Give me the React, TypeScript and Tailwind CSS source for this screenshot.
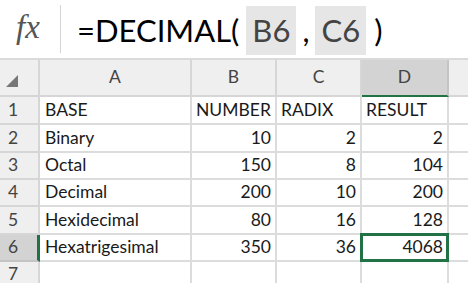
import React from "react";

const rows: [string, string, string, string][] = [
  ["BASE", "NUMBER", "RADIX", "RESULT"],
  ["Binary", "10", "2", "2"],
  ["Octal", "150", "8", "104"],
  ["Decimal", "200", "10", "200"],
  ["Hexidecimal", "80", "16", "128"],
  ["Hexatrigesimal", "350", "36", "4068"],
  ["", "", "", ""],
];
const heights = ["h-[28px]", "h-[28px]", "h-[27px]", "h-[27px]", "h-[28px]", "h-[27px]", "h-[27px]"];

export default function App() {
  const font = { fontFamily: "Lato, 'Open Sans', sans-serif" };
  return (
    <div className="w-[468px] h-[283px] overflow-hidden bg-white text-[#1a1a1a]" style={font}>
      {/* formula bar */}
      <div className="flex h-[60px] border-b-2 border-[#dadada] bg-white">
        <div className="w-[60px] flex items-center justify-center">
          <span className="text-[33px] italic text-[#555] -mt-[3px] -ml-[4px]" style={{ fontFamily: "'Liberation Serif', serif" }}>fx</span>
        </div>
        <div className="w-px bg-[#d4d4d4] my-[5px]" />
        <div className="flex items-center pl-[16px] pt-[2px] text-[31px] text-black leading-none">
          <span>=DECIMAL(</span>
          <span className="ml-[7px] bg-[#e6e6e6] text-[#444] h-[49px] px-[6px] flex items-center">B6</span>
          <span className="ml-[6px] mr-[6px]">,</span>
          <span className="bg-[#e6e6e6] text-[#444] h-[49px] px-[6px] flex items-center">C6</span>
          <span className="ml-[8px]">)</span>
        </div>
      </div>
      {/* grid */}
      <div className="grid grid-cols-[40px_152px_85px_85px_87px_1fr] text-[17.5px]">
        {/* header row */}
        <div className="h-[37px] bg-[#efefef] border-r-2 border-b-2 border-[#d6d6d6] relative">
          <svg className="absolute left-[6px] top-[15px]" width="13" height="12" viewBox="0 0 13 12">
            <polygon points="12,0 12,12 0,12" fill="#777" />
          </svg>
        </div>
        {["A", "B", "C"].map((c) => (
          <div key={c} className="h-[37px] bg-[#efefef] border-r-2 border-b-2 border-[#d6d6d6] flex items-center justify-center text-[#444]">
            {c}
          </div>
        ))}
        <div className="h-[37px] bg-[#d3d3d3] border-r-2 border-[#c4c4c4] border-b-2 border-b-[#217346] flex items-center justify-center text-[#444]">
          D
        </div>
        <div className="h-[37px] bg-[#efefef] border-b-2 border-[#d6d6d6]" />
        {rows.map((r, i) => {
          const sel = i === 5;
          const h = heights[i];
          return (
            <React.Fragment key={i}>
              <div
                className={`${h} border-b-2 flex items-center pl-[8px] text-[#444] ${
                  sel ? "bg-[#d3d3d3] border-b-[#c4c4c4] border-r-[3px] border-r-[#217346]" : "bg-[#efefef] border-[#d6d6d6] border-r-2"
                }`}
              >
                {i + 1}
              </div>
              <div className={`${h} border-r-2 border-b-2 border-[#dcdcdc] flex items-center pl-[5px]`}>{r[0]}</div>
              {i === 0 ? (
                <>
                  <div className={`${h} border-r-2 border-b-2 border-[#dcdcdc] flex items-center pl-[4px]`}>{r[1]}</div>
                  <div className={`${h} border-r-2 border-b-2 border-[#dcdcdc] flex items-center pl-[4px]`}>{r[2]}</div>
                  <div className={`${h} border-r-2 border-b-2 border-[#dcdcdc] flex items-center pl-[4px]`}>{r[3]}</div>
                </>
              ) : (
                <>
                  <div className={`${h} border-r-2 border-b-2 border-[#dcdcdc] flex items-center justify-end pr-[4px]`}>{r[1]}</div>
                  <div className={`${h} border-r-2 border-b-2 border-[#dcdcdc] flex items-center justify-end pr-[4px]`}>{r[2]}</div>
                  <div className={`${h} border-r-2 border-b-2 border-[#dcdcdc] flex items-center justify-end pr-[4px] relative`}>
                    {sel && <div className="absolute -left-[2px] -top-[2px] -right-[2px] -bottom-[2px] border-[3px] border-[#217346]" />}
                    <span className="relative">{r[3]}</span>
                  </div>
                </>
              )}
              <div className={`${h} border-b-2 border-[#dcdcdc]`} />
            </React.Fragment>
          );
        })}
      </div>
    </div>
  );
}
